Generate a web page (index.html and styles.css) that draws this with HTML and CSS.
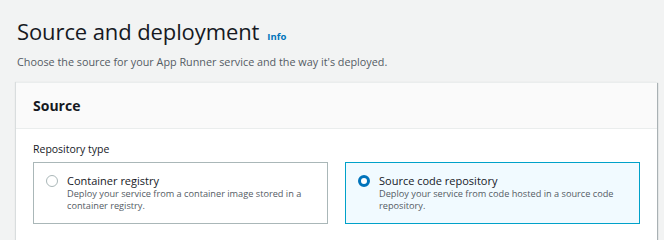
FILE: index.html
```html
<!DOCTYPE html>
<html>
<head>
<meta charset="utf-8">
<link rel="stylesheet" href="styles.css">
</head>
<body>
<div class="page">
  <div class="head">
    <h1 class="title">Source and deployment</h1>
    <a class="info" href="#">Info</a>
  </div>
  <p class="subtitle">Choose the source for your App Runner service and the way it's deployed.</p>
  <section class="card">
    <div class="card-header"><h2>Source</h2></div>
    <div class="card-body">
      <div class="label">Repository type</div>
      <div class="tiles">
        <div class="tile">
          <span class="radio"></span>
          <div class="tile-text">
            <div class="tile-title">Container registry</div>
            <div class="tile-desc">Deploy your service from a container image stored in a container registry.</div>
          </div>
        </div>
        <div class="tile selected">
          <span class="radio checked"></span>
          <div class="tile-text">
            <div class="tile-title">Source code repository</div>
            <div class="tile-desc">Deploy your service from code hosted in a source code repository.</div>
          </div>
        </div>
      </div>
    </div>
  </section>
</div>
</body>
</html>
```

FILE: styles.css
```css
html, body {
  margin: 0;
  padding: 0;
  background: #f2f3f3;
  font-family: "Open Sans", "Noto Sans", sans-serif;
  color: #16191f;
}
.page {
  padding: 15px 7px 0 16px;
}
.head {
  display: flex;
  align-items: baseline;
  gap: 8px;
  padding-left: 1px;
}
.title {
  margin: 0;
  font-size: 22px;
  font-weight: 400;
  line-height: 32px;
  letter-spacing: -0.1px;
}
.info {
  font-size: 9.5px;
  font-weight: 700;
  color: #0073bb;
  text-decoration: none;
}
.subtitle {
  margin: 7px 0 0 1px;
  font-size: 10.8px;
  line-height: 16px;
  color: #545b64;
}
.card {
  margin-top: 12px;
  background: #fff;
  border-top: 1px solid #eaeded;
  box-shadow: 1px 1px 1px 0 rgba(0, 28, 36, 0.3), -1px 0 1px 0 rgba(0, 28, 36, 0.1);
  height: 200px;
}
.card-header {
  background: #fafafa;
  border-bottom: 1px solid #eaeded;
  height: 45px;
  display: flex;
  align-items: center;
  padding-left: 17px;
}
.card-header h2 {
  margin: 0;
  font-size: 14px;
  font-weight: 700;
  line-height: 20px;
}
.card-body {
  padding: 13px 17px 0 17px;
}
.label {
  font-size: 10.5px;
  line-height: 14px;
  color: #16191f;
}
.tiles {
  display: grid;
  grid-template-columns: 295px 295px;
  gap: 17px;
  margin-top: 6px;
}
.tile {
  box-sizing: border-box;
  height: 62px;
  border: 1px solid #aab7b8;
  display: flex;
  align-items: flex-start;
  padding: 11px 10px 0 12px;
  gap: 9px;
}
.tile.selected {
  border-color: #00a1c9;
  background: #f1faff;
}
.radio {
  box-sizing: border-box;
  flex: none;
  width: 12px;
  height: 12px;
  border-radius: 50%;
  border: 1px solid #aab7b8;
  background: #fff;
  margin-top: 1px;
}
.radio.checked {
  border: 3.5px solid #0073bb;
}
.tile-title {
  font-size: 11px;
  line-height: 14px;
}
.tile-desc {
  font-size: 9.2px;
  line-height: 12px;
  color: #545b64;
}
```
